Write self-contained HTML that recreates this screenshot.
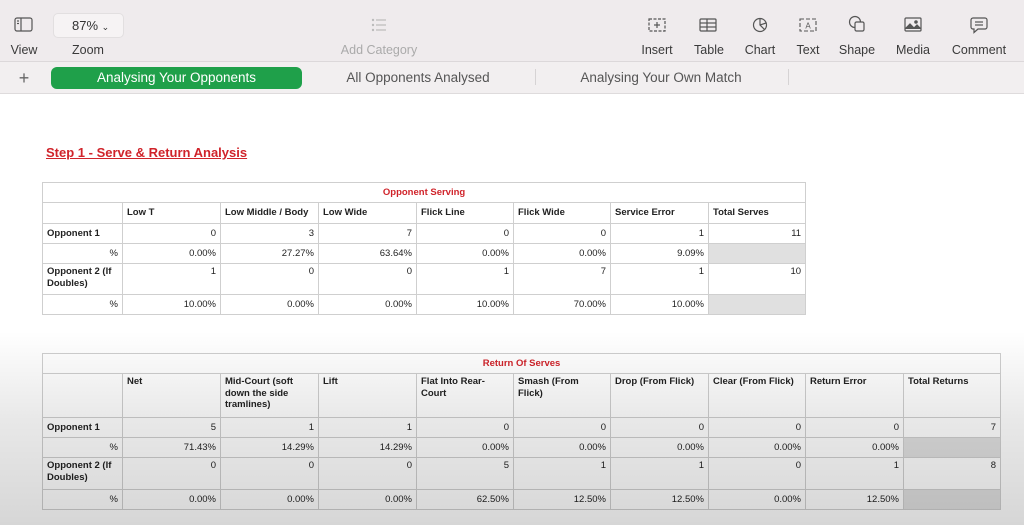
<!DOCTYPE html>
<html><head><meta charset="utf-8"><style>
*{margin:0;padding:0;box-sizing:border-box}
body{width:1024px;height:525px;overflow:hidden;position:relative;background:#fff;font-family:"Liberation Sans",Arial,sans-serif}
.tb{position:absolute;left:0;top:0;width:1024px;height:62px;background:#efebed;border-bottom:1px solid #dcd8da}
.lbl{position:absolute;top:43px;font-size:12.5px;color:#3a3a3a;text-align:center}
.ic{position:absolute;top:16px}
.tabs{position:absolute;left:0;top:62px;width:1024px;height:32px;background:#f2eff0;border-bottom:1px solid #dedbdc}
.tab{position:absolute;top:5px;height:22px;font-size:13.5px;color:#555;line-height:22px;text-align:center}
.act{left:51px;width:251px;background:#1fa04a;color:#fff;border-radius:6px}
.sep{position:absolute;top:7px;width:1px;height:16px;background:#d6d3d4}
table{position:absolute;border-collapse:collapse;table-layout:fixed;font-size:9.5px;color:#222}
td{border:1px solid #cfcfcf;padding:2px 4px;vertical-align:top;line-height:11.5px}
td.n{text-align:right}
td.b{font-weight:bold}
td.t{color:#d0232a;font-weight:bold;text-align:center;vertical-align:middle}
td.g{background:#e0e0e0}
.ov{position:absolute;left:0;top:0;width:1024px;height:525px;pointer-events:none;background:linear-gradient(to bottom,rgba(0,0,0,0) 0,rgba(0,0,0,0) 63%,rgba(0,0,0,.09) 80%,rgba(0,0,0,.16) 100%)}
</style></head><body>
<div class="tb">
<svg class="ic" style="left:14px;top:17px" width="20" height="16" viewBox="0 0 20 16" fill="none" stroke="#555" stroke-width="1.2"><rect x="1" y="1" width="17" height="13" rx="2"/><line x1="7" y1="1" x2="7" y2="14"/><line x1="3" y1="4" x2="5" y2="4"/><line x1="3" y1="6.5" x2="5" y2="6.5"/></svg>
<div style="position:absolute;left:53px;top:13px;width:71px;height:25px;background:#f6f3f4;border:1px solid #e2dfe0;border-radius:5px;font-size:13px;color:#333;line-height:23px;padding-left:18px">87% <span style="font-size:9px">&#8964;</span></div>
<div class="lbl" style="left:6px;width:36px">View</div>
<div class="lbl" style="left:68px;width:40px">Zoom</div>
<svg class="ic" style="left:371px;top:18px" width="16" height="14" viewBox="0 0 16 14" stroke="#bbb" stroke-width="1.2"><line x1="5" y1="2" x2="15" y2="2"/><line x1="5" y1="7" x2="15" y2="7"/><line x1="5" y1="12" x2="15" y2="12"/><circle cx="2" cy="2" r=".6"/><circle cx="2" cy="7" r=".6"/><circle cx="2" cy="12" r=".6"/></svg>
<div class="lbl" style="left:330px;width:98px;color:#aaa">Add Category</div>
<svg class="ic" style="left:648px;top:17px" width="18" height="16" viewBox="0 0 18 16" fill="none" stroke="#555" stroke-width="1.2"><rect x="1" y="2" width="16" height="12" stroke-dasharray="3 1.5"/><line x1="9" y1="5" x2="9" y2="11"/><line x1="6" y1="8" x2="12" y2="8"/></svg>
<div class="lbl" style="left:636px;width:42px">Insert</div>
<svg class="ic" style="left:699px;top:18px" width="18" height="14" viewBox="0 0 18 14" fill="none" stroke="#555" stroke-width="1.2"><rect x="1" y="1" width="16" height="12" rx="1"/><line x1="1" y1="5" x2="17" y2="5"/><line x1="1" y1="9" x2="17" y2="9"/><line x1="8" y1="1" x2="8" y2="13"/></svg>
<div class="lbl" style="left:689px;width:40px">Table</div>
<svg class="ic" style="left:752px;top:17px" width="16" height="16" viewBox="0 0 16 16" fill="none" stroke="#555" stroke-width="1.2"><circle cx="8" cy="8" r="6.5"/><path d="M8 1.5V8l4.5 4.5M8 8l6-2"/></svg>
<div class="lbl" style="left:740px;width:40px">Chart</div>
<svg class="ic" style="left:799px;top:17px" width="18" height="16" viewBox="0 0 18 16" fill="none" stroke="#555" stroke-width="1.1"><rect x="1" y="2" width="16" height="12" stroke-dasharray="4 2"/><text x="9" y="11.5" font-size="8" fill="#555" stroke="none" text-anchor="middle" font-family="Liberation Sans">A</text></svg>
<div class="lbl" style="left:792px;width:32px">Text</div>
<svg class="ic" style="left:848px;top:15px" width="18" height="18" viewBox="0 0 18 18" fill="none" stroke="#555" stroke-width="1.2"><circle cx="7" cy="7" r="5.5"/><rect x="7" y="7" width="9" height="9" rx="1.5" fill="#efebed"/></svg>
<div class="lbl" style="left:836px;width:42px">Shape</div>
<svg class="ic" style="left:904px;top:17px" width="18" height="15" viewBox="0 0 18 15" fill="none" stroke="#555" stroke-width="1.2"><rect x="1" y="1" width="16" height="13" rx="1"/><path d="M1 12l5-5 4 4 3-3 4 4" fill="#555"/><circle cx="12" cy="5" r="1.2" fill="#555"/></svg>
<div class="lbl" style="left:891px;width:44px">Media</div>
<svg class="ic" style="left:970px;top:17px" width="18" height="17" viewBox="0 0 18 17" fill="none" stroke="#555" stroke-width="1.2"><path d="M3 1h12a2 2 0 0 1 2 2v7a2 2 0 0 1-2 2H8l-4 3.5V12H3a2 2 0 0 1-2-2V3a2 2 0 0 1 2-2z"/><line x1="5" y1="5" x2="13" y2="5"/><line x1="5" y1="8" x2="13" y2="8"/></svg>
<div class="lbl" style="left:948px;width:62px">Comment</div>
</div>
<div class="tabs">
<div class="tab" style="left:14px;width:20px;font-size:18px;color:#666">+</div>
<div class="tab act">Analysing Your Opponents</div>
<div class="tab" style="left:318px;width:200px">All Opponents Analysed</div>
<div class="sep" style="left:535px"></div>
<div class="tab" style="left:550px;width:222px">Analysing Your Own Match</div>
<div class="sep" style="left:788px"></div>
</div>
<div style="position:absolute;left:46px;top:145px;font-size:13px;font-weight:bold;color:#d0232a;text-decoration:underline">Step 1 - Serve &amp; Return Analysis</div>

<table style="left:42px;top:182px;width:763px">
<colgroup><col style="width:80px"><col style="width:98px"><col style="width:98px"><col style="width:98px"><col style="width:97px"><col style="width:97px"><col style="width:98px"><col style="width:97px"></colgroup>
<tr style="height:20px"><td class="t" colspan="8">Opponent Serving</td></tr>
<tr style="height:21px"><td></td><td class="b" style="vertical-align:middle">Low T</td><td class="b" style="vertical-align:middle">Low Middle / Body</td><td class="b" style="vertical-align:middle">Low Wide</td><td class="b" style="vertical-align:middle">Flick Line</td><td class="b" style="vertical-align:middle">Flick Wide</td><td class="b" style="vertical-align:middle">Service Error</td><td class="b" style="vertical-align:middle">Total Serves</td></tr>
<tr style="height:20px"><td class="b" style="vertical-align:middle">Opponent 1</td><td class="n" style="vertical-align:middle">0</td><td class="n" style="vertical-align:middle">3</td><td class="n" style="vertical-align:middle">7</td><td class="n" style="vertical-align:middle">0</td><td class="n" style="vertical-align:middle">0</td><td class="n" style="vertical-align:middle">1</td><td class="n" style="vertical-align:middle">11</td></tr>
<tr style="height:20px"><td class="n" style="vertical-align:middle">%</td><td class="n" style="vertical-align:middle">0.00%</td><td class="n" style="vertical-align:middle">27.27%</td><td class="n" style="vertical-align:middle">63.64%</td><td class="n" style="vertical-align:middle">0.00%</td><td class="n" style="vertical-align:middle">0.00%</td><td class="n" style="vertical-align:middle">9.09%</td><td class="g"></td></tr>
<tr style="height:31px"><td class="b">Opponent 2 (If Doubles)</td><td class="n">1</td><td class="n">0</td><td class="n">0</td><td class="n">1</td><td class="n">7</td><td class="n">1</td><td class="n">10</td></tr>
<tr style="height:20px"><td class="n" style="vertical-align:middle">%</td><td class="n" style="vertical-align:middle">10.00%</td><td class="n" style="vertical-align:middle">0.00%</td><td class="n" style="vertical-align:middle">0.00%</td><td class="n" style="vertical-align:middle">10.00%</td><td class="n" style="vertical-align:middle">70.00%</td><td class="n" style="vertical-align:middle">10.00%</td><td class="g"></td></tr>
</table>

<table style="left:42px;top:353px;width:958px">
<colgroup><col style="width:80px"><col style="width:98px"><col style="width:98px"><col style="width:98px"><col style="width:97px"><col style="width:97px"><col style="width:98px"><col style="width:97px"><col style="width:98px"><col style="width:97px"></colgroup>
<tr style="height:20px"><td class="t" colspan="10">Return Of Serves</td></tr>
<tr style="height:44px"><td></td><td class="b">Net</td><td class="b">Mid-Court (soft down the side tramlines)</td><td class="b">Lift</td><td class="b">Flat Into Rear-Court</td><td class="b">Smash (From Flick)</td><td class="b">Drop (From Flick)</td><td class="b">Clear (From Flick)</td><td class="b">Return Error</td><td class="b">Total Returns</td></tr>
<tr style="height:20px"><td class="b" style="vertical-align:middle">Opponent 1</td><td class="n" style="vertical-align:middle">5</td><td class="n" style="vertical-align:middle">1</td><td class="n" style="vertical-align:middle">1</td><td class="n" style="vertical-align:middle">0</td><td class="n" style="vertical-align:middle">0</td><td class="n" style="vertical-align:middle">0</td><td class="n" style="vertical-align:middle">0</td><td class="n" style="vertical-align:middle">0</td><td class="n" style="vertical-align:middle">7</td></tr>
<tr style="height:20px"><td class="n" style="vertical-align:middle">%</td><td class="n" style="vertical-align:middle">71.43%</td><td class="n" style="vertical-align:middle">14.29%</td><td class="n" style="vertical-align:middle">14.29%</td><td class="n" style="vertical-align:middle">0.00%</td><td class="n" style="vertical-align:middle">0.00%</td><td class="n" style="vertical-align:middle">0.00%</td><td class="n" style="vertical-align:middle">0.00%</td><td class="n" style="vertical-align:middle">0.00%</td><td class="g"></td></tr>
<tr style="height:32px"><td class="b">Opponent 2 (If Doubles)</td><td class="n">0</td><td class="n">0</td><td class="n">0</td><td class="n">5</td><td class="n">1</td><td class="n">1</td><td class="n">0</td><td class="n">1</td><td class="n">8</td></tr>
<tr style="height:20px"><td class="n" style="vertical-align:middle">%</td><td class="n" style="vertical-align:middle">0.00%</td><td class="n" style="vertical-align:middle">0.00%</td><td class="n" style="vertical-align:middle">0.00%</td><td class="n" style="vertical-align:middle">62.50%</td><td class="n" style="vertical-align:middle">12.50%</td><td class="n" style="vertical-align:middle">12.50%</td><td class="n" style="vertical-align:middle">0.00%</td><td class="n" style="vertical-align:middle">12.50%</td><td class="g"></td></tr>
</table>
<div class="ov"></div>
</body></html>
